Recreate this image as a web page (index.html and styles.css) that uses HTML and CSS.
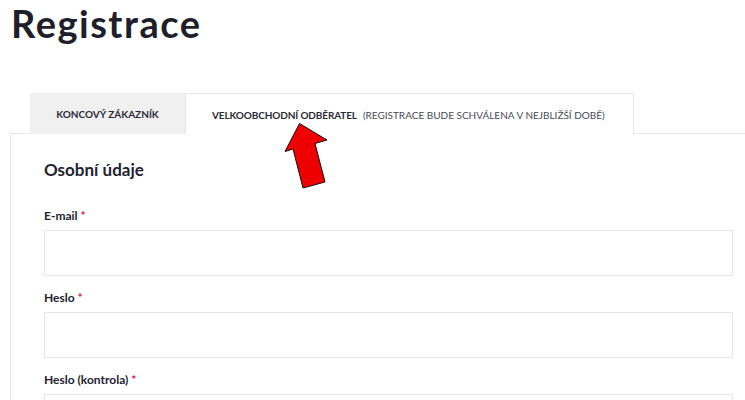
FILE: index.html
```html
<!DOCTYPE html>
<html lang="cs">
<head>
<meta charset="utf-8">
<title>Registrace</title>
<link rel="stylesheet" href="styles.css">
</head>
<body>
<div class="page">
  <h1 class="title">Registrace</h1>
  <div class="tabs">
    <div class="tab tab-inactive">Koncový zákazník</div>
    <div class="tab tab-active"><strong>Velkoobchodní odběratel</strong><span class="note">(Registrace bude schválena v nejbližší době)</span></div>
  </div>
  <div class="panel">
    <h2 class="section">Osobní údaje</h2>
    <div class="field">
      <label class="label">E-mail <span class="req">*</span></label>
      <div class="input"></div>
    </div>
    <div class="field">
      <label class="label">Heslo <span class="req">*</span></label>
      <div class="input"></div>
    </div>
    <div class="field">
      <label class="label">Heslo (kontrola) <span class="req">*</span></label>
      <div class="input"></div>
    </div>
  </div>
  <svg class="arrow" width="60" height="80" viewBox="270 115 60 80" aria-hidden="true">
    <polygon points="299.5,123.5 327,140 315,143.5 325,182 303,188 293,149 285,151.5" fill="#ee0000" stroke="#111" stroke-width="1" stroke-linejoin="miter"/>
  </svg>
</div>
</body>
</html>
```

FILE: styles.css
```css
html, body {
  margin: 0;
  padding: 0;
  background: #ffffff;
  overflow: hidden;
}
body {
  font-family: Lato, "Open Sans", "DejaVu Sans", sans-serif;
  color: #23232f;
}
.page {
  position: relative;
  width: 766px;
  padding-left: 10px;
}
.title {
  margin: 0;
  padding-top: 1px;
  font-size: 38px;
  line-height: 44px;
  font-weight: 700;
  letter-spacing: 1.5px;
  color: #1f1f2b;
  padding-left: 1px;
}
.tabs {
  display: flex;
  margin-top: 48px;
  margin-left: 20px;
  margin-bottom: -1px;
  position: relative;
  z-index: 1;
}
.tab {
  height: 41px;
  box-sizing: border-box;
  display: flex;
  align-items: center;
  padding: 0 27px;
  font-size: 10px;
  text-transform: uppercase;
  letter-spacing: 0;
  color: #2b2b38;
  white-space: nowrap;
}
.tab-inactive {
  background: #f0f0f0;
  font-weight: 700;
  width: 155px;
  justify-content: center;
}
.tab-active {
  background: #ffffff;
  border: 1px solid #e6e6e6;
  border-bottom: none;
  width: 449px;
  padding-top: 1px;
  padding-left: 26px;
}
.tab-active strong {
  font-weight: 700;
  letter-spacing: -0.13px;
}
.note {
  margin-left: 6px;
  font-weight: 400;
  color: #4a4a55;
}
.panel {
  border: 1px solid #e6e6e6;
  border-right: none;
  padding: 24px 33px 40px 33px;
}
.section {
  margin: 0;
  font-size: 17px;
  line-height: 24px;
  font-weight: 700;
  color: #23232f;
}
.field {
  margin-top: 25px;
}
.field + .field {
  margin-top: 13px;
}
.label {
  display: block;
  font-size: 12px;
  line-height: 18px;
  font-weight: 700;
  color: #23232f;
  margin-bottom: 5px;
}
.req {
  color: #e0104a;
}
.input {
  height: 46px;
  box-sizing: border-box;
  border: 1px solid #e6e6e6;
  background: #ffffff;
  width: 689px;
}
.arrow {
  position: absolute;
  left: 270px;
  top: 115px;
  z-index: 2;
}
```
